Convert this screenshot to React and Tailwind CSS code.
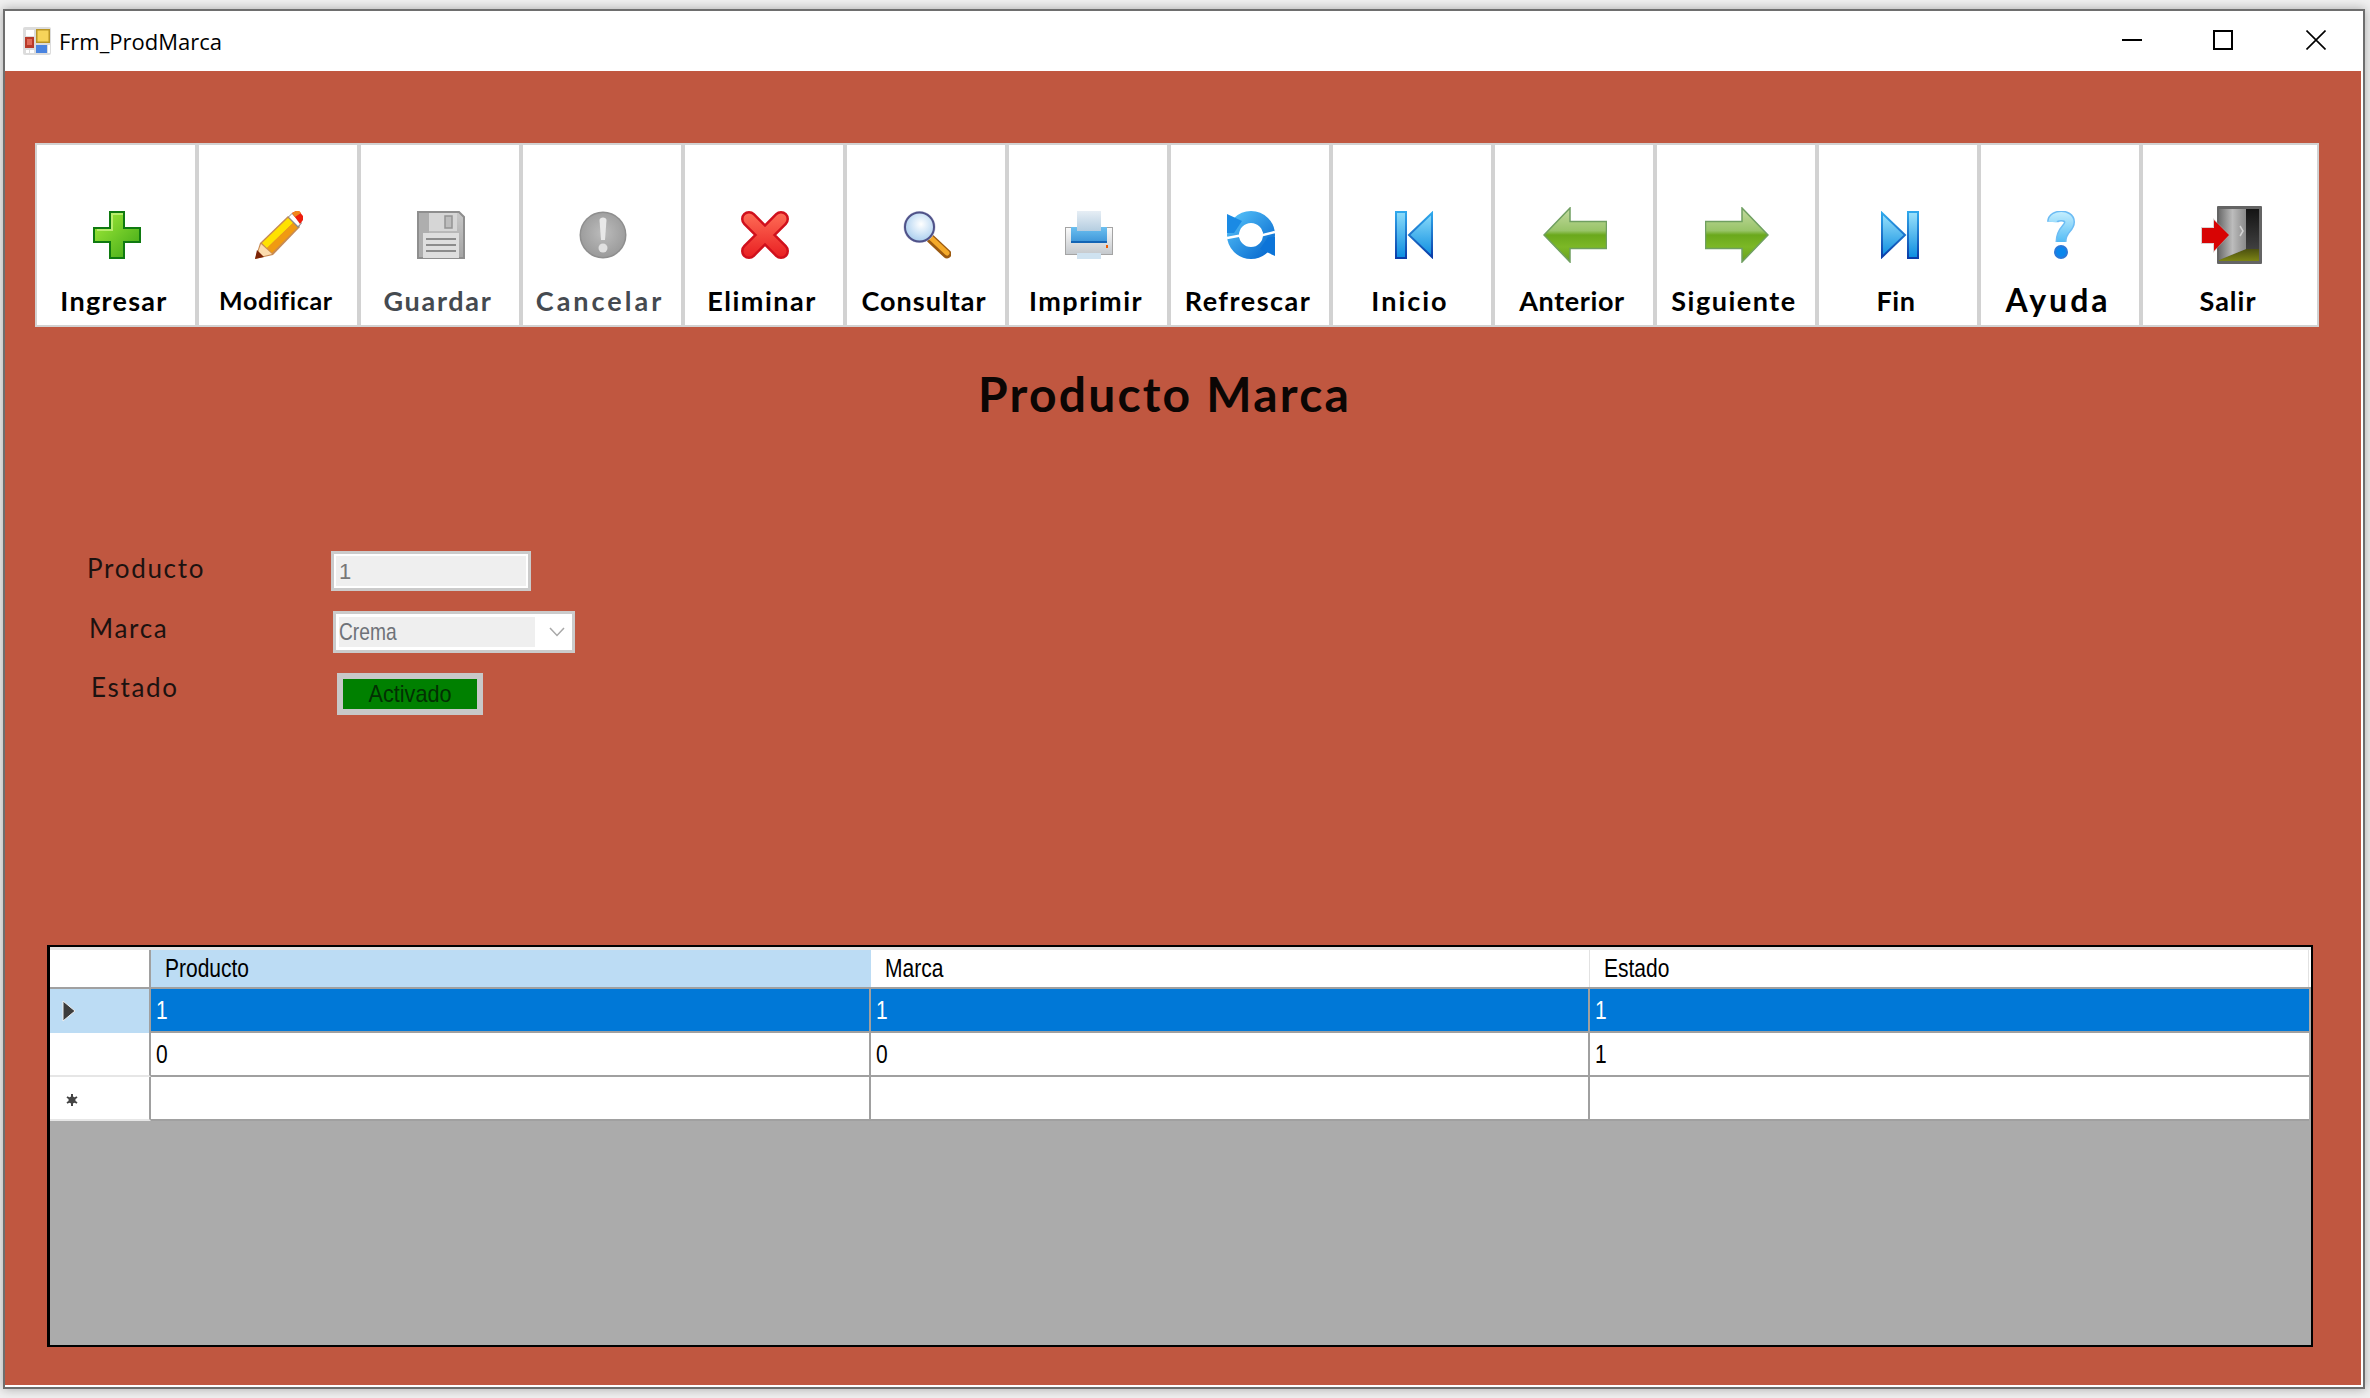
import React from "react";

const FONT_LABEL = "font-['Lato',sans-serif]";
const FONT_UI = "font-['Liberation_Sans',Arial,sans-serif]";

function AppIcon() {
  return (
    <svg width="28" height="28" viewBox="0 0 28 28">
      <rect width="28" height="28" rx="2" fill="#dcdcdc" />
      <rect x="3" y="3" width="8" height="6" fill="#fff" />
      <rect x="13" y="2" width="14" height="14" fill="#b89424" />
      <rect x="14.5" y="3.5" width="11" height="11" fill="#f6d45a" />
      <rect x="2" y="10" width="9" height="11" fill="#b83a2a" />
      <rect x="4" y="12" width="5" height="6" fill="#e06a58" />
      <rect x="3" y="23" width="3" height="3" fill="#fff" />
      <rect x="7" y="23" width="4" height="3" fill="#fff" />
      <rect x="13" y="18" width="11" height="8" fill="#4a84e0" />
      <rect x="25" y="18" width="2" height="8" fill="#fff" />
    </svg>
  );
}

function PlusIcon() {
  return (
    <svg width="48" height="48" viewBox="0 0 48 48">
      <defs>
        <linearGradient id="plusFill" x1="0" y1="0" x2="1" y2="1">
          <stop offset="0" stopColor="#a4ec3a" />
          <stop offset="1" stopColor="#3fa816" />
        </linearGradient>
      </defs>
      <path d="M16 0H32V16H48V32H32V48H16V32H0V16H16Z" fill="#0f7a10" />
      <path d="M18 2H30V18H46V30H30V46H18V30H2V18H18Z" fill="url(#plusFill)" />
      <path d="M18 2H30V4H20V20H4V18H18Z" fill="#c4f27c" opacity="0.8" />
    </svg>
  );
}

function PencilIcon() {
  return (
    <svg width="48" height="48" viewBox="0 0 48 48">
      <path d="M5 32L33 5L45 16L18 44L0 48Z" fill="#c88a52" />
      <path d="M7 32L33 7L38 12L12 37Z" fill="#ffe200" />
      <path d="M12 37L38 12L43 16L17 42Z" fill="#f09a12" />
      <path d="M6 33L17 43L1 47Z" fill="#fcdcae" />
      <path d="M0 48L2 39L9 46Z" fill="#7c2406" />
      <path d="M33 6L37 2L47 12L43 17Z" fill="#8a8a8a" />
      <path d="M34 6L37 3L46 12L43 15Z" fill="#fff" />
      <path d="M37 2L41 0H44L48 5V9L45 13Z" fill="#ee1c0c" />
      <path d="M37 2L41 0H44L46 2L40 6Z" fill="#f0861c" />
    </svg>
  );
}

function SaveIcon() {
  return (
    <svg width="48" height="48" viewBox="0 0 48 48">
      <defs>
        <linearGradient id="saveFill" x1="0" y1="0" x2="0" y2="1">
          <stop offset="0" stopColor="#c8c8c8" />
          <stop offset="1" stopColor="#a4a4a4" />
        </linearGradient>
      </defs>
      <path d="M1 1H42L47 6V47H1Z" fill="url(#saveFill)" stroke="#8e8e8e" strokeWidth="2" />
      <rect x="2" y="2" width="10" height="44" fill="#aeaeae" />
      <rect x="12" y="2" width="28" height="18" fill="#d6d6d6" />
      <rect x="28" y="5" width="7" height="12" fill="#bdbdbd" stroke="#949494" strokeWidth="1.5" />
      <rect x="6" y="22" width="36" height="25" fill="#dedede" />
      <rect x="9" y="27" width="30" height="2" fill="#8c8c8c" />
      <rect x="9" y="33" width="30" height="2" fill="#8c8c8c" />
      <rect x="9" y="39" width="30" height="2" fill="#8c8c8c" />
    </svg>
  );
}

function CancelIcon() {
  return (
    <svg width="48" height="48" viewBox="0 0 48 48">
      <defs>
        <radialGradient id="cancelFill" cx="0.5" cy="0.45" r="0.6">
          <stop offset="0" stopColor="#bcbcbc" />
          <stop offset="1" stopColor="#989898" />
        </radialGradient>
      </defs>
      <circle cx="24" cy="24" r="23.5" fill="#8e8e8e" />
      <circle cx="24" cy="24" r="22" fill="url(#cancelFill)" />
      <path d="M20.5 9C20.5 5.5 27.5 5.5 27.5 9L26 29H22Z" fill="#e8e8e8" />
      <circle cx="24" cy="37" r="4.5" fill="#e0e0e0" />
    </svg>
  );
}

function DeleteIcon() {
  return (
    <svg width="48" height="48" viewBox="0 0 48 48">
      <defs>
        <linearGradient id="xFill" gradientUnits="userSpaceOnUse" x1="0" y1="0" x2="0" y2="48">
          <stop offset="0" stopColor="#ff7058" />
          <stop offset="1" stopColor="#e81c20" />
        </linearGradient>
      </defs>
      <path d="M8 8L40 40M40 8L8 40" stroke="#d0101c" strokeWidth="16" strokeLinecap="round" />
      <path d="M8 8L40 40M40 8L8 40" stroke="url(#xFill)" strokeWidth="11" strokeLinecap="round" />
    </svg>
  );
}

function SearchIcon() {
  return (
    <svg width="48" height="48" viewBox="0 0 48 48">
      <defs>
        <radialGradient id="lensFill" cx="0.55" cy="0.4" r="0.65">
          <stop offset="0" stopColor="#ffffff" />
          <stop offset="0.45" stopColor="#d6e8f8" />
          <stop offset="1" stopColor="#a4caec" />
        </radialGradient>
      </defs>
      <path d="M28 28L44 43" stroke="#9c5a10" strokeWidth="9" strokeLinecap="round" />
      <path d="M28 27L44 42" stroke="#f4aa2a" strokeWidth="5" strokeLinecap="round" />
      <circle cx="16.5" cy="16" r="16" fill="#c8c8e0" />
      <circle cx="16.5" cy="16" r="14.5" fill="url(#lensFill)" stroke="#4f5288" strokeWidth="2" />
    </svg>
  );
}

function PrintIcon() {
  return (
    <svg width="48" height="48" viewBox="0 0 48 48">
      <defs>
        <linearGradient id="paperFill" x1="0" y1="0" x2="0" y2="1">
          <stop offset="0" stopColor="#e6eef5" />
          <stop offset="1" stopColor="#b4cde0" />
        </linearGradient>
        <linearGradient id="bodyFill" x1="0" y1="0" x2="0" y2="1">
          <stop offset="0" stopColor="#fbfbfb" />
          <stop offset="1" stopColor="#c4c8cc" />
        </linearGradient>
        <linearGradient id="trayFill" x1="0" y1="0" x2="0" y2="1">
          <stop offset="0" stopColor="#6cc0f0" />
          <stop offset="1" stopColor="#3c94d8" />
        </linearGradient>
      </defs>
      <rect x="0.5" y="16.5" width="47" height="27" fill="url(#bodyFill)" stroke="#a4a4a4" />
      <rect x="12" y="42" width="24" height="6" fill="#cfe2f0" />
      <path d="M6 16H42V32H6Z" fill="url(#trayFill)" />
      <rect x="6" y="30" width="36" height="2" fill="#1464b4" />
      <rect x="12" y="0" width="24" height="20" fill="url(#paperFill)" />
      <rect x="41" y="34" width="2" height="3" fill="#f05a00" />
    </svg>
  );
}

// Two arrows chasing each other, with the white swirl across the middle
function RefreshIcon() {
  return (
    <svg width="48" height="48" viewBox="0 0 48 48">
      <defs>
        <linearGradient id="refreshFill" x1="0" y1="0" x2="1" y2="1">
          <stop offset="0" stopColor="#50bcf6" />
          <stop offset="1" stopColor="#0a6cd0" />
        </linearGradient>
      </defs>
      <circle cx="24" cy="24" r="18" fill="none" stroke="url(#refreshFill)" strokeWidth="12" />
      <path d="M0 3L15 10L7 22H0Z" fill="#1a8ae4" />
      <path d="M48 45L33 38L41 26H48Z" fill="#0c74d8" />
      <path d="M14 20C17 12 28 11 33 17L36 22L24 22L27 18C24 16 20 17 18 21Z" fill="#fff" />
      <path d="M34 28C31 36 20 37 15 31L12 26L24 26L21 30C24 32 28 31 30 27Z" fill="#fff" />
      <path d="M0 27L16 24L32 25L48 21" fill="none" stroke="#fff" strokeWidth="2.5" />
    </svg>
  );
}

function FirstIcon() {
  return (
    <svg width="48" height="48" viewBox="0 0 48 48">
      <defs>
        <linearGradient id="firstLine" x1="0" y1="0" x2="0" y2="1">
          <stop offset="0" stopColor="#2ea8ec" />
          <stop offset="1" stopColor="#0a3ca8" />
        </linearGradient>
        <linearGradient id="firstFill" x1="0" y1="0" x2="0" y2="1">
          <stop offset="0" stopColor="#8cdcfa" />
          <stop offset="1" stopColor="#0a8ce0" />
        </linearGradient>
      </defs>
      <rect x="7" y="1" width="10" height="46" fill="url(#firstFill)" stroke="url(#firstLine)" strokeWidth="2" />
      <path d="M43 2V46L20 24Z" fill="url(#firstFill)" stroke="url(#firstLine)" strokeWidth="2" />
    </svg>
  );
}

function LastIcon() {
  return (
    <svg width="48" height="48" viewBox="0 0 48 48">
      <defs>
        <linearGradient id="lastLine" x1="0" y1="0" x2="0" y2="1">
          <stop offset="0" stopColor="#2ea8ec" />
          <stop offset="1" stopColor="#0a3ca8" />
        </linearGradient>
        <linearGradient id="lastFill" x1="0" y1="0" x2="0" y2="1">
          <stop offset="0" stopColor="#9ce2fb" />
          <stop offset="1" stopColor="#0a8ce0" />
        </linearGradient>
      </defs>
      <path d="M7 2V46L30 24Z" fill="url(#lastFill)" stroke="url(#lastLine)" strokeWidth="2" />
      <rect x="33" y="1" width="10" height="46" fill="url(#lastFill)" stroke="url(#lastLine)" strokeWidth="2" />
    </svg>
  );
}

function ArrowStops() {
  return (
    <>
      <stop offset="0" stopColor="#c4daa0" />
      <stop offset="0.42" stopColor="#98c468" />
      <stop offset="0.5" stopColor="#6aa81c" />
      <stop offset="0.72" stopColor="#7cb826" />
      <stop offset="1" stopColor="#68a01e" />
    </>
  );
}

function PrevIcon() {
  return (
    <svg width="64" height="56" viewBox="0 0 64 56">
      <defs>
        <linearGradient id="prevFill" x1="0" y1="0" x2="0" y2="1">
          <ArrowStops />
        </linearGradient>
      </defs>
      <path d="M1 28L27 1V14.5H63.5V41.5H27V55Z" fill="url(#prevFill)" stroke="#6f9f60" strokeWidth="1.5" />
    </svg>
  );
}

function NextIcon() {
  return (
    <svg width="64" height="56" viewBox="0 0 64 56">
      <defs>
        <linearGradient id="nextFill" x1="0" y1="0" x2="0" y2="1">
          <ArrowStops />
        </linearGradient>
      </defs>
      <path d="M63 28L37 1V14.5H0.5V41.5H37V55Z" fill="url(#nextFill)" stroke="#6f9f60" strokeWidth="1.5" />
    </svg>
  );
}

function HelpIcon() {
  return (
    <svg width="28" height="48" viewBox="0 0 28 48">
      <defs>
        <linearGradient id="helpFill" gradientUnits="userSpaceOnUse" x1="0" y1="0" x2="0" y2="48">
          <stop offset="0" stopColor="#c8f0fe" />
          <stop offset="0.6" stopColor="#5cc0f6" />
          <stop offset="1" stopColor="#0a78e0" />
        </linearGradient>
      </defs>
      <path d="M5.5 11C6 3 22.5 3 22.5 11C22.5 18 14 18 14 31" fill="none" stroke="#6cbcf4" strokeWidth="11" />
      <path d="M5.5 11C6 3 22.5 3 22.5 11C22.5 18 14 18 14 31" fill="none" stroke="url(#helpFill)" strokeWidth="8" />
      <circle cx="14" cy="41" r="7" fill="#2a78d8" />
      <circle cx="14" cy="41" r="5" fill="#0a86ec" />
    </svg>
  );
}

function ExitIcon() {
  return (
    <svg width="61" height="58" viewBox="0 0 61 58">
      <defs>
        <linearGradient id="doorFill" x1="0" y1="0" x2="1" y2="0">
          <stop offset="0" stopColor="#6e6e6e" />
          <stop offset="0.5" stopColor="#bcbcbc" />
          <stop offset="1" stopColor="#8a8a8a" />
        </linearGradient>
        <linearGradient id="roomFill" x1="0" y1="0" x2="0" y2="1">
          <stop offset="0" stopColor="#141414" />
          <stop offset="1" stopColor="#444" />
        </linearGradient>
        <linearGradient id="floorFill" x1="0" y1="0" x2="0" y2="1">
          <stop offset="0" stopColor="#4c5010" />
          <stop offset="1" stopColor="#7c8414" />
        </linearGradient>
      </defs>
      <rect x="16" y="0" width="45" height="58" rx="1" fill="#646464" />
      <rect x="45" y="3" width="13" height="44" fill="url(#roomFill)" />
      <path d="M18 54L45 43H58V55H18Z" fill="url(#floorFill)" />
      <path d="M18 3H45V43L18 54Z" fill="url(#doorFill)" />
      <path d="M39 20L42 25L39 30" fill="none" stroke="#d4d4d4" strokeWidth="1.5" />
      <path d="M0 21H12V12L29 29L12 47V38H0Z" fill="#b8a8a8" opacity="0.5" />
      <path d="M1 22H13V14L28 29L13 45V37H1Z" fill="#d80404" />
    </svg>
  );
}

const TOOLBAR = [
  { label: "Ingresar", Icon: PlusIcon, text: "text-[27px] tracking-[1.3px] text-black" },
  { label: "Modificar", Icon: PencilIcon, text: "text-[25px] tracking-[0.7px] text-black" },
  { label: "Guardar", Icon: SaveIcon, text: "text-[27px] tracking-[1.7px] text-[#454a50]" },
  { label: "Cancelar", Icon: CancelIcon, text: "text-[27px] tracking-[3px] text-[#454a50]" },
  { label: "Eliminar", Icon: DeleteIcon, text: "text-[27px] tracking-[1.5px] text-black" },
  { label: "Consultar", Icon: SearchIcon, text: "text-[27px] tracking-[1px] text-black" },
  { label: "Imprimir", Icon: PrintIcon, text: "text-[27px] tracking-[1.5px] text-black" },
  { label: "Refrescar", Icon: RefreshIcon, text: "text-[27px] tracking-[1.5px] text-black" },
  { label: "Inicio", Icon: FirstIcon, text: "text-[27px] tracking-[2px] text-black" },
  { label: "Anterior", Icon: PrevIcon, text: "text-[27px] tracking-[0.6px] text-black" },
  { label: "Siguiente", Icon: NextIcon, text: "text-[27px] tracking-[1.5px] text-black" },
  { label: "Fin", Icon: LastIcon, text: "text-[27px] tracking-[0.5px] text-black" },
  { label: "Ayuda", Icon: HelpIcon, text: "text-[32px] tracking-[3px] text-black" },
  { label: "Salir", Icon: ExitIcon, text: "text-[27px] tracking-[1px] text-black" },
];

function ToolButton({ label, Icon, text, last }) {
  return (
    <button
      className={`flex h-[184px] flex-col items-center border-2 border-[#d2d2d2] bg-white pt-[58px] ${
        last ? "w-[178px]" : "w-[162px]"
      }`}
    >
      <span className="flex h-[64px] items-center justify-center pl-[2px]">
        <Icon />
      </span>
      <span className={`mt-[13px] flex h-[40px] items-center pr-[4px] leading-none font-bold ${FONT_LABEL} ${text}`}>
        {label}
      </span>
    </button>
  );
}

function FormLabel({ children, className }) {
  return (
    <span className={`-ml-[1px] text-[26px] leading-none tracking-[1.7px] text-[#1c1210] ${FONT_LABEL} ${className}`}>
      {children}
    </span>
  );
}

const COLUMNS = ["Producto", "Marca", "Estado"];
const COL_WIDTHS = ["w-[720px]", "w-[719px]", "w-[719px]"];

function GridText({ children, className }) {
  return (
    <span className={`inline-block origin-left scale-x-[0.84] text-[25px] leading-none ${FONT_UI} ${className}`}>
      {children}
    </span>
  );
}

function HeaderRow() {
  return (
    <div className="flex h-[39px] border-b-2 border-[#a0a0a0] bg-white">
      <div className="h-full w-[101px] border-r-2 border-[#a0a0a0]" />
      {COLUMNS.map((name, i) => (
        <div
          key={name}
          className={`flex h-full items-center pl-[14px] ${COL_WIDTHS[i]} ${
            i === 0 ? "bg-[#bcdcf4]" : "border-r border-[#e2e2e2]"
          }`}
        >
          <GridText className="text-black">{name}</GridText>
        </div>
      ))}
    </div>
  );
}

function DataRow({ values, selected, marker }) {
  return (
    <div className="flex h-[44px]">
      <div
        className={`flex h-full w-[101px] items-center border-r-2 border-[#a0a0a0] pl-[12px] ${
          selected ? "bg-[#bcdcf4]" : "border-b-2 border-b-[#e6e6e6] bg-white"
        }`}
      >
        {marker}
      </div>
      {[0, 1, 2].map((i) => (
        <div
          key={i}
          className={`flex h-full items-center border-b-2 border-[#a0a0a0] pl-[5px] ${COL_WIDTHS[i]} ${
            i < 2 ? "border-r-2" : ""
          } ${selected ? "bg-[#0078d7]" : "bg-white"}`}
        >
          <GridText className={selected ? "text-white" : "text-black"}>{values[i]}</GridText>
        </div>
      ))}
    </div>
  );
}

export default function App() {
  return (
    <div className="h-[1398px] w-[2370px] overflow-hidden bg-[#f0f0f0] pt-[9px] pl-[3px]">
      <div className="flex h-[1380px] w-[2362px] flex-col border-2 border-[#6e6e6e] bg-white shadow-[0_0_10px_rgba(0,0,0,0.3)]">
        {/* Title bar */}
        <div className="flex h-[60px] shrink-0 items-center bg-white pl-[18px]">
          <AppIcon />
          <span className="ml-[8px] text-[22px] text-black font-['Open_Sans',sans-serif]">Frm_ProdMarca</span>
          <div className="ml-auto flex items-center pr-[37px] pb-[2px]">
            <svg width="20" height="20" viewBox="0 0 20 20">
              <rect y="9" width="20" height="2" fill="#000" />
            </svg>
            <svg className="ml-[71px]" width="20" height="20" viewBox="0 0 20 20">
              <rect x="1" y="1" width="18" height="18" fill="none" stroke="#000" strokeWidth="2" />
            </svg>
            <svg className="ml-[73px]" width="20" height="20" viewBox="0 0 20 20">
              <path d="M0.5 0.5L19.5 19.5M19.5 0.5L0.5 19.5" stroke="#000" strokeWidth="1.6" />
            </svg>
          </div>
        </div>

        {/* Form body */}
        <div className="flex-1 border-r-2 border-b-2 border-white bg-[#c05740]">
          <div className="mt-[72px] ml-[30px] flex">
            {TOOLBAR.map((item, i) => (
              <ToolButton key={item.label} {...item} last={i === TOOLBAR.length - 1} />
            ))}
          </div>

          <h1 className={`mt-[37px] pl-[973px] text-[48px] leading-[60px] font-bold tracking-[2.2px] text-[#0c0604] ${FONT_LABEL}`}>
            Producto Marca
          </h1>

          <div className="mt-[127px] flex flex-col gap-[20px]">
            <div className="ml-[83px] flex h-[40px] items-center">
              <FormLabel className="mb-[6px] w-[244px]">Producto</FormLabel>
              <div className="flex h-[40px] w-[200px] items-center border-[3px] border-[#cbcbcb] bg-[#efefef] pl-[5px] outline-2 -outline-offset-[5px] outline-white">
                <span className={`text-[22px] text-[#777] ${FONT_UI}`}>1</span>
              </div>
            </div>
            <div className="ml-[85px] flex h-[42px] items-center">
              <FormLabel className="mb-[8px] w-[244px]">Marca</FormLabel>
              <div className="flex h-[42px] w-[242px] items-center border-[3px] border-[#cbcbcb] bg-white p-[3px]">
                <div className="flex h-[30px] w-[196px] items-center bg-[#efefef]">
                  <span className={`origin-left scale-x-[0.8] text-[24px] text-[#6e7278] ${FONT_UI}`}>Crema</span>
                </div>
                <svg className="ml-[14px]" width="16" height="10" viewBox="0 0 16 10">
                  <path d="M1 1L8 8.5L15 1" fill="none" stroke="#a8a8a8" strokeWidth="1.5" />
                </svg>
              </div>
            </div>
            <div className="ml-[87px] flex h-[42px] items-center">
              <FormLabel className="mb-[14px] w-[246px]">Estado</FormLabel>
              <div className="flex h-[42px] w-[146px] items-center justify-center border-[6px] border-[#c8c8c8] bg-[#008000]">
                <span className={`scale-x-[0.9] text-[24px] text-[#033003] ${FONT_UI}`}>Activado</span>
              </div>
            </div>
          </div>

          {/* Data grid */}
          <div className="mt-[230px] ml-[42px] h-[402px] w-[2266px] border-t-2 border-r-2 border-b-2 border-l-[3px] border-black bg-[#ababab]">
            <div className="h-[3px] bg-[#e4e4e4]" />
            <HeaderRow />
            <DataRow
              selected
              values={["1", "1", "1"]}
              marker={
                <svg width="14" height="22" viewBox="0 0 14 22">
                  <path d="M1 1L13 11L1 21Z" fill="#3c3c3c" stroke="#f0f0f0" strokeWidth="1" />
                </svg>
              }
            />
            <DataRow values={["0", "0", "1"]} />
            <DataRow
              values={["", "", ""]}
              marker={
                <svg className="mt-[4px] ml-[4px]" width="12" height="14" viewBox="0 0 12 14">
                  <path d="M6 1V13M1 4L11 10M11 4L1 10" stroke="#444" strokeWidth="2" />
                  <circle cx="6" cy="7" r="3.5" fill="#444" />
                </svg>
              }
            />
          </div>
        </div>
      </div>
    </div>
  );
}
